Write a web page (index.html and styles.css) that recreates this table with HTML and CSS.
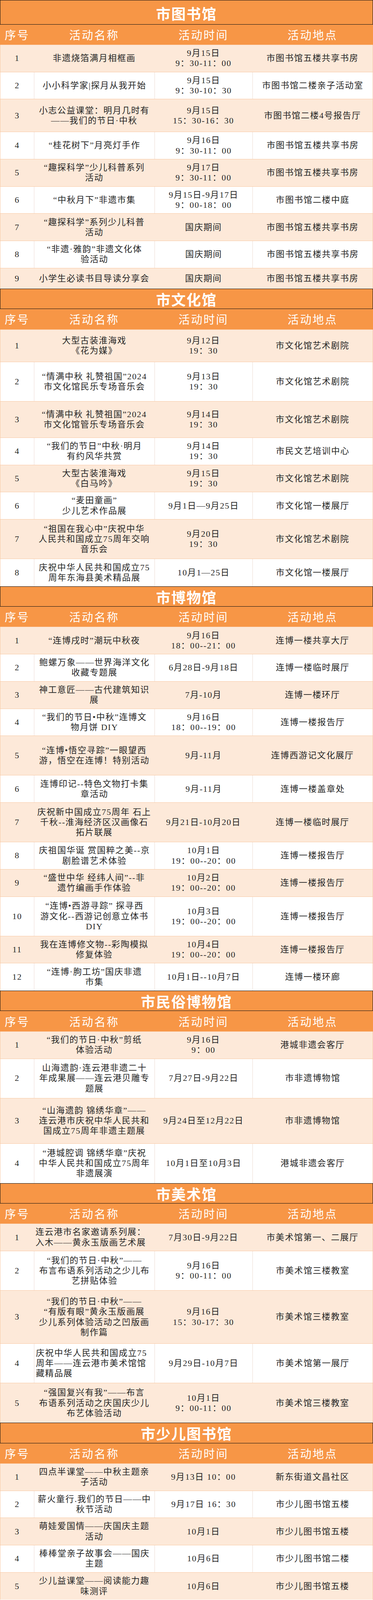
FILE: index.html
```html
<!DOCTYPE html>
<html lang="zh-CN">
<head>
<meta charset="utf-8">
<title>中秋国庆活动安排</title>
<link rel="stylesheet" href="styles.css">
</head>
<body>
<main class="page">

<section class="venue">
  <h2 class="venue-title first">市图书馆</h2>
  <div class="row head"><div class="cell">序号</div><div class="cell">活动名称</div><div class="cell">活动时间</div><div class="cell">活动地点</div></div>
  <div class="row odd"><div class="cell">1</div><div class="cell">非遗烧箔满月相框画</div><div class="cell">9月15日<br>9：30-11：00</div><div class="cell">市图书馆五楼共享书房</div></div>
  <div class="row even"><div class="cell">2</div><div class="cell">小小科学家|探月从我开始</div><div class="cell">9月15日<br>9：30-10：30</div><div class="cell">市图书馆二楼亲子活动室</div></div>
  <div class="row odd r96"><div class="cell">3</div><div class="cell">小志公益课堂：明月几时有<br>——我们的节日·中秋</div><div class="cell">9月15日<br>15：30-16：30</div><div class="cell">市图书馆二楼4号报告厅</div></div>
  <div class="row even"><div class="cell">4</div><div class="cell">“桂花树下”月亮灯手作</div><div class="cell">9月16日<br>9：30-11：00</div><div class="cell">市图书馆五楼共享书房</div></div>
  <div class="row odd"><div class="cell">5</div><div class="cell">“趣探科学”少儿科普系列<br>活动</div><div class="cell">9月17日<br>9：30-11：00</div><div class="cell">市图书馆五楼共享书房</div></div>
  <div class="row even"><div class="cell">6</div><div class="cell">“中秋月下”非遗市集</div><div class="cell">9月15日-9月17日<br>9：00-18：00</div><div class="cell">市图书馆二楼中庭</div></div>
  <div class="row odd"><div class="cell">7</div><div class="cell">“趣探科学”系列少儿科普<br>活动</div><div class="cell">国庆期间</div><div class="cell">市图书馆五楼共享书房</div></div>
  <div class="row even"><div class="cell">8</div><div class="cell">“非遗·雅韵”非遗文化体<br>验活动</div><div class="cell">国庆期间</div><div class="cell">市图书馆五楼共享书房</div></div>
  <div class="row odd r60"><div class="cell">9</div><div class="cell">小学生必读书目导读分享会</div><div class="cell">国庆期间</div><div class="cell">市图书馆五楼共享书房</div></div>
</section>

<section class="venue">
  <h2 class="venue-title">市文化馆</h2>
  <div class="row head"><div class="cell">序号</div><div class="cell">活动名称</div><div class="cell">活动时间</div><div class="cell">活动地点</div></div>
  <div class="row odd r96"><div class="cell">1</div><div class="cell">大型古装淮海戏<br>《花为媒》</div><div class="cell">9月12日<br>19：30</div><div class="cell">市文化馆艺术剧院</div></div>
  <div class="row even r116"><div class="cell">2</div><div class="cell">“情满中秋 礼赞祖国”2024<br>市文化馆民乐专场音乐会</div><div class="cell">9月13日<br>19：30</div><div class="cell">市文化馆艺术剧院</div></div>
  <div class="row odd r106"><div class="cell">3</div><div class="cell">“情满中秋 礼赞祖国”2024<br>市文化馆管乐专场音乐会</div><div class="cell">9月14日<br>19：30</div><div class="cell">市文化馆艺术剧院</div></div>
  <div class="row even"><div class="cell">4</div><div class="cell">“我们的节日”中秋·明月<br>有约风华共赏</div><div class="cell">9月14日<br>19：30</div><div class="cell">市民文艺培训中心</div></div>
  <div class="row odd"><div class="cell">5</div><div class="cell">大型古装淮海戏<br>《白马吟》</div><div class="cell">9月15日<br>19：30</div><div class="cell">市文化馆艺术剧院</div></div>
  <div class="row even"><div class="cell">6</div><div class="cell">“麦田童画”<br>少儿艺术作品展</div><div class="cell">9月1日—9月25日</div><div class="cell">市文化馆一楼展厅</div></div>
  <div class="row odd r116"><div class="cell">7</div><div class="cell">“祖国在我心中”庆祝中华<br>人民共和国成立75周年交响<br>音乐会</div><div class="cell">9月20日<br>19：30</div><div class="cell">市文化馆艺术剧院</div></div>
  <div class="row even"><div class="cell">8</div><div class="cell">庆祝中华人民共和国成立75<br>周年东海县美术精品展</div><div class="cell">10月1—25日</div><div class="cell">市文化馆一楼展厅</div></div>
</section>

<section class="venue">
  <h2 class="venue-title">市博物馆</h2>
  <div class="row head"><div class="cell">序号</div><div class="cell">活动名称</div><div class="cell">活动时间</div><div class="cell">活动地点</div></div>
  <div class="row odd"><div class="cell">1</div><div class="cell">“连博戌时”潮玩中秋夜</div><div class="cell">9月16日<br>18：00--21：00</div><div class="cell">连博一楼共享大厅</div></div>
  <div class="row even"><div class="cell">2</div><div class="cell">鲍螺万象——世界海洋文化<br>收藏专题展</div><div class="cell">6月28日-9月18日</div><div class="cell">连博一楼临时展厅</div></div>
  <div class="row odd"><div class="cell">3</div><div class="cell">神工意匠——古代建筑知识<br>展</div><div class="cell">7月-10月</div><div class="cell">连博一楼环厅</div></div>
  <div class="row even"><div class="cell">4</div><div class="cell">“我们的节日•中秋”连博文<br>物月饼 DIY</div><div class="cell">9月16日<br>18：00--19：00</div><div class="cell">连博一楼报告厅</div></div>
  <div class="row odd r116"><div class="cell">5</div><div class="cell">“连博•悟空寻踪”一眼望西<br>游，悟空在连博！特别活动</div><div class="cell">9月-11月</div><div class="cell">连博西游记文化展厅</div></div>
  <div class="row even"><div class="cell">6</div><div class="cell">连博印记--特色文物打卡集<br>章活动</div><div class="cell">9月-11月</div><div class="cell">连博一楼盖章处</div></div>
  <div class="row odd r116"><div class="cell">7</div><div class="cell">庆祝新中国成立75周年 石上<br>千秋--淮海经济区汉画像石<br>拓片联展</div><div class="cell">9月21日-10月20日</div><div class="cell">连博一楼临时展厅</div></div>
  <div class="row even"><div class="cell">8</div><div class="cell">庆祖国华诞 赏国粹之美--京<br>剧脸谱艺术体验</div><div class="cell">10月1日<br>19：00--20：00</div><div class="cell">连博一楼报告厅</div></div>
  <div class="row odd"><div class="cell">9</div><div class="cell">“盛世中华 经纬人间”--非<br>遗竹编画手作体验</div><div class="cell">10月2日<br>19：00--20：00</div><div class="cell">连博一楼报告厅</div></div>
  <div class="row even r116"><div class="cell">10</div><div class="cell">“连博•西游寻踪” 探寻西<br>游文化--西游记创意立体书<br>DIY</div><div class="cell">10月3日<br>19：00--20：00</div><div class="cell">连博一楼报告厅</div></div>
  <div class="row odd"><div class="cell">11</div><div class="cell">我在连博修文物--彩陶模拟<br>修复体验</div><div class="cell">10月4日<br>19：00--20：00</div><div class="cell">连博一楼报告厅</div></div>
  <div class="row even"><div class="cell">12</div><div class="cell">“连博·朐工坊”国庆非遗<br>市集</div><div class="cell">10月1日--10月7日</div><div class="cell">连博一楼环廊</div></div>
</section>

<section class="venue">
  <h2 class="venue-title">市民俗博物馆</h2>
  <div class="row head"><div class="cell">序号</div><div class="cell">活动名称</div><div class="cell">活动时间</div><div class="cell">活动地点</div></div>
  <div class="row odd"><div class="cell">1</div><div class="cell">“我们的节日·中秋”剪纸<br>体验活动</div><div class="cell">9月16日<br>9：00</div><div class="cell">港城非遗会客厅</div></div>
  <div class="row even r116"><div class="cell">2</div><div class="cell">山海遗韵·连云港非遗二十<br>年成果展——连云港贝雕专<br>题展</div><div class="cell">7月27日-9月22日</div><div class="cell">市非遗博物馆</div></div>
  <div class="row odd r133"><div class="cell">3</div><div class="cell">“山海遗韵 锦绣华章”——<br>连云港市庆祝中华人民共和<br>国成立75周年非遗主题展</div><div class="cell">9月24日至12月22日</div><div class="cell">市非遗博物馆</div></div>
  <div class="row even r116"><div class="cell">4</div><div class="cell">“港城腔调 锦绣华章”庆祝<br>中华人民共和国成立75周年<br>非遗展演</div><div class="cell">10月1日至10月3日</div><div class="cell">港城非遗会客厅</div></div>
</section>

<section class="venue">
  <h2 class="venue-title">市美术馆</h2>
  <div class="row head"><div class="cell">序号</div><div class="cell">活动名称</div><div class="cell">活动时间</div><div class="cell">活动地点</div></div>
  <div class="row odd"><div class="cell">1</div><div class="cell left">连云港市名家邀请系列展：<br>入木——黄永玉版画艺术展</div><div class="cell">7月30日-9月22日</div><div class="cell">市美术馆第一、二展厅</div></div>
  <div class="row even r116"><div class="cell">2</div><div class="cell">“我们的节日·中秋”——<br>布言布语系列活动之少儿布<br>艺拼贴体验</div><div class="cell">9月16日<br>9：00-11：00</div><div class="cell">市美术馆三楼教室</div></div>
  <div class="row odd r156"><div class="cell">3</div><div class="cell">“我们的节日·中秋”——<br>“有版有眼”黄永玉版画展<br>少儿系列体验活动之凹版画<br>制作篇</div><div class="cell">9月16日<br>15：30-17：30</div><div class="cell">市美术馆三楼教室</div></div>
  <div class="row even r116"><div class="cell">4</div><div class="cell left">庆祝中华人民共和国成立75<br>周年——连云港市美术馆馆<br>藏精品展</div><div class="cell">9月29日-10月7日</div><div class="cell">市美术馆第一展厅</div></div>
  <div class="row odd r116"><div class="cell">5</div><div class="cell">“强国复兴有我”——布言<br>布语系列活动之庆国庆少儿<br>布艺体验活动</div><div class="cell">10月1日<br>9：00-11：00</div><div class="cell">市美术馆三楼教室</div></div>
</section>

<section class="venue">
  <h2 class="venue-title">市少儿图书馆</h2>
  <div class="row head"><div class="cell">序号</div><div class="cell">活动名称</div><div class="cell">活动时间</div><div class="cell">活动地点</div></div>
  <div class="row odd"><div class="cell">1</div><div class="cell">四点半课堂——中秋主题亲<br>子活动</div><div class="cell">9月13日 10：00</div><div class="cell">新东街道文昌社区</div></div>
  <div class="row even"><div class="cell">2</div><div class="cell">薪火童行.我们的节日——中<br>秋节活动</div><div class="cell">9月17日 16：30</div><div class="cell">市少儿图书馆五楼</div></div>
  <div class="row odd"><div class="cell">3</div><div class="cell">萌娃爱国情——庆国庆主题<br>活动</div><div class="cell">10月1日</div><div class="cell">市少儿图书馆五楼</div></div>
  <div class="row even"><div class="cell">4</div><div class="cell">棒棒堂亲子故事会——国庆<br>主题</div><div class="cell">10月6日</div><div class="cell">市少儿图书馆二楼</div></div>
  <div class="row odd"><div class="cell">5</div><div class="cell">少儿益课堂——阅读能力趣<br>味测评</div><div class="cell">10月6日</div><div class="cell">市少儿图书馆五楼</div></div>
</section>

</main>
</body>
</html>
```

FILE: styles.css
```css
/* The poster is 4699 units tall; one unit is a slice of the window height,
   so the whole schedule always fills exactly one screen from top to bottom. */
:root {
  --u: calc(100vh / 4699);
}

* {
  box-sizing: border-box;
}

html, body {
  margin: 0;
  padding: 0;
  background: #ffffff;
}

.page {
  width: 956px;
  font-family: "Liberation Serif", "Noto Sans CJK SC", serif;
  color: #262626;
}

.venue {
  display: flex;
  flex-direction: column;
}

.venue-title {
  margin: 0;
  height: calc(60 * var(--u));
  display: flex;
  align-items: center;
  justify-content: center;
  background: #f79646;
  border: 1px solid #111111;
  color: #ffffff;
  font-family: "Noto Sans CJK SC", sans-serif;
  font-weight: 700;
  font-size: 37px;
  letter-spacing: 2px;
  line-height: 1;
  padding-top: calc(3 * var(--u));
}

.venue-title.first {
  height: calc(72 * var(--u));
  padding-top: calc(7 * var(--u));
}

.row {
  display: grid;
  grid-template-columns: 86px 309px 251px 1fr;
  height: calc(80 * var(--u));
  border-left: 1px solid #f8c9a4;
  border-right: 1px solid #f8c9a4;
  border-bottom: 1px solid #f8c9a4;
}

.row:last-child {
  border-bottom: none;
}

.row.r60 { height: calc(60 * var(--u)); }
.row.r96 { height: calc(96 * var(--u)); }
.row.r106 { height: calc(106 * var(--u)); }
.row.r116 { height: calc(116 * var(--u)); }
.row.r133 { height: calc(133 * var(--u)); }
.row.r156 { height: calc(156 * var(--u)); }

.cell {
  display: flex;
  align-items: center;
  justify-content: center;
  text-align: center;
  white-space: nowrap;
  font-size: 22px;
  letter-spacing: 1.6px;
  line-height: calc(30 * var(--u));
}

.cell.left {
  justify-content: flex-start;
  text-align: left;
  padding-left: 4px;
}

.row.head {
  height: calc(60 * var(--u));
  background: #f79646;
  border-left-color: #f79646;
  border-right-color: #f79646;
  border-bottom-color: #f8b27a;
}

.row.head .cell {
  color: #ffffff;
  font-family: "Noto Sans CJK SC", sans-serif;
  font-size: 29px;
  letter-spacing: 3px;
  line-height: 1;
}

.row.odd {
  background: #fde9d9;
}

.row.even {
  background: #ffffff;
}

.row.even .cell + .cell {
  border-left: 1px solid #eddcd3;
}
```
